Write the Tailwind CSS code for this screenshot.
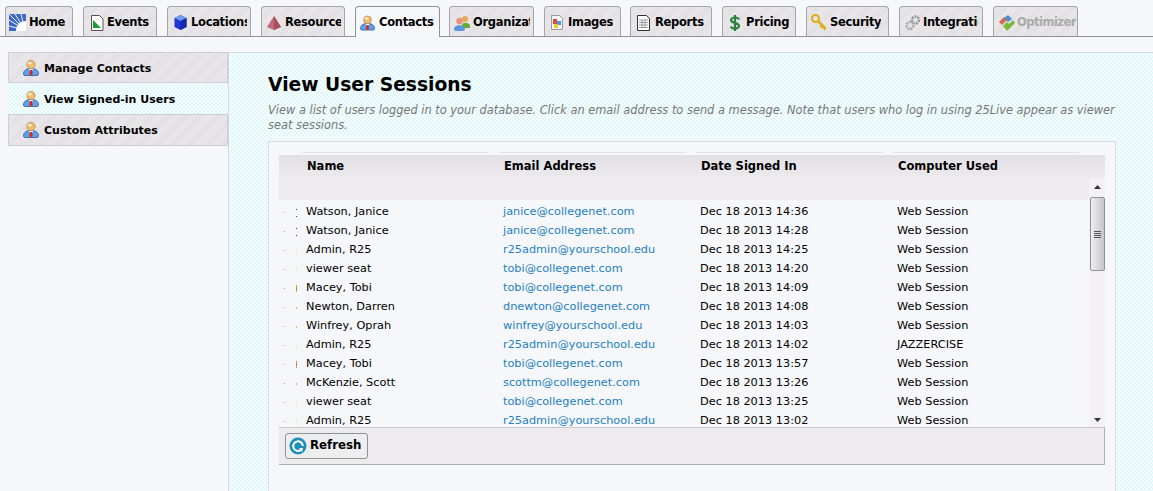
<!DOCTYPE html>
<html lang="en">
<head>
<meta charset="UTF-8">
<title>View User Sessions</title>
<script src="https://cdn.jsdelivr.net/npm/@tailwindcss/browser@4"></script>
</head>
<body class="h-[491px] overflow-hidden bg-[#f5f7fa] font-['DejaVu_Sans',Verdana,sans-serif] text-black">
<svg class="hidden">
  <symbol id="person" viewBox="0 0 16 16">
    <path d="M.5 14c0-3.500 2.500-5.500 7.500-5.500s7.500 2 7.500 5.500c0 1-.7 1.500-1.500 1.500H2C1.200 15.500.5 15 .5 14z" fill="#5f9fe8" stroke="#2c5a9e" stroke-width=".8"/>
    <path d="M5.500 8.700h5L9 10.500H7z" fill="#fff"/>
    <path d="M7 10h2l.7 4-1.700 1.500L6.300 14z" fill="#e3241c"/>
    <circle cx="8" cy="4.600" r="4.200" fill="#f0bc70" stroke="#a97b35" stroke-width=".6"/>
    <ellipse cx="6.800" cy="3.200" rx="2" ry="1.300" fill="#fcebc8"/>
  </symbol>
</svg>

<!-- tabs -->
<nav class="flex h-[37px] items-end border-b border-[#8f9296] pl-[5px] text-[11.500px] font-bold tracking-[-0.3px]">
  <a class="mr-[10px] flex h-[30px] w-[68px] items-center rounded-t-[4px] border border-b-0 border-[#a5a5a8] bg-[#e6e4e6] bg-[repeating-linear-gradient(135deg,#ebe9eb_0_1px,#e0dee0_1px_2px)] pt-[2px] pr-[3px] pl-[3px]">
    <svg class="mr-[3px] shrink-0" width="17" height="17" viewBox="0 0 17 17"><rect width="17" height="17" fill="#3f69c4"/><path d="M16 16L0 0M16 16L0 6M16 16L0 12M16 16L6 0M16 16L12 0" stroke="#e8eefa" stroke-width="1"/><path d="M17 7v10H7c0-6 4-10 10-10z" fill="#fff"/></svg>
    <span class="overflow-hidden whitespace-nowrap">Home</span>
  </a>
  <a class="mr-[10px] flex h-[30px] w-[74px] items-center rounded-t-[4px] border border-b-0 border-[#a5a5a8] bg-[#e6e4e6] bg-[repeating-linear-gradient(135deg,#ebe9eb_0_1px,#e0dee0_1px_2px)] pt-[2px] pr-[3px] pl-[6px]">
    <svg class="mr-[3px] shrink-0" width="14" height="16" viewBox="0 0 14 16"><path d="M1.500.5h8l3.500 3.500v11.500h-11.500z" fill="#fff" stroke="#555"/><path d="M3 5l8 8H3z" fill="#1f9a38"/></svg>
    <span class="overflow-hidden whitespace-nowrap">Events</span>
  </a>
  <a class="mr-[10px] flex h-[30px] w-[84px] items-center rounded-t-[4px] border border-b-0 border-[#a5a5a8] bg-[#e6e4e6] bg-[repeating-linear-gradient(135deg,#ebe9eb_0_1px,#e0dee0_1px_2px)] pt-[2px] pr-[3px] pl-[6px]">
    <svg class="mr-[4px] shrink-0" width="13" height="15" viewBox="0 0 13 15"><path d="M6.500 0l6 3v9l-6 3-6-3V3z" fill="#1c36d8"/><path d="M6.500 0l6 3-6 3-6-3z" fill="#6f9cf0"/><path d="M6.500 6l6-3v9l-6 3z" fill="#142aa8"/></svg>
    <span class="overflow-hidden whitespace-nowrap">Locations</span>
  </a>
  <a class="mr-[10px] flex h-[30px] w-[84px] items-center rounded-t-[4px] border border-b-0 border-[#a5a5a8] bg-[#e6e4e6] bg-[repeating-linear-gradient(135deg,#ebe9eb_0_1px,#e0dee0_1px_2px)] pt-[2px] pr-[3px] pl-[5px]">
    <svg class="mr-[4px] shrink-0" width="14" height="14" viewBox="0 0 14 14"><path d="M7 0l7 11-7 3-7-3z" fill="#c06a76"/><path d="M7 0l7 11-7 3z" fill="#a8505e"/></svg>
    <span class="overflow-hidden whitespace-nowrap">Resources</span>
  </a>
  <a class="relative z-10 mr-[9px] -mb-px flex h-[31px] w-[85px] items-center rounded-t-[4px] border border-b-0 border-[#8f9296] bg-[#f5f7fa] pt-[1px] pr-[3px] pl-[4px]">
    <svg class="mr-[4px] shrink-0" width="15" height="16"><use href="#person"/></svg>
    <span class="overflow-hidden whitespace-nowrap">Contacts</span>
  </a>
  <a class="mr-[10px] flex h-[30px] w-[85px] items-center rounded-t-[4px] border border-b-0 border-[#a5a5a8] bg-[#e6e4e6] bg-[repeating-linear-gradient(135deg,#ebe9eb_0_1px,#e0dee0_1px_2px)] pt-[2px] pr-[3px] pl-[4px]">
    <svg class="mr-[3px] shrink-0" width="16" height="16" viewBox="0 0 16 16"><circle cx="11" cy="4" r="3" fill="#e9a94f"/><path d="M8 10c0-3 6-3 8 0v3H8z" fill="#6aa92f"/><circle cx="5.500" cy="6" r="3.200" fill="#e98f7a"/><path d="M0 14c0-5 11-5 11 0 0 1-1 2-2 2H2c-1 0-2-1-2-2z" fill="#5a95e0"/></svg>
    <span class="overflow-hidden whitespace-nowrap">Organizations</span>
  </a>
  <a class="mr-[9px] flex h-[30px] w-[77px] items-center rounded-t-[4px] border border-b-0 border-[#a5a5a8] bg-[#e6e4e6] bg-[repeating-linear-gradient(135deg,#ebe9eb_0_1px,#e0dee0_1px_2px)] pt-[2px] pr-[3px] pl-[6px]">
    <svg class="mr-[5px] shrink-0" width="12" height="15" viewBox="0 0 12 15"><path d="M.5.500h8l3 3v11H.5z" fill="#f4f4f4" stroke="#999"/><rect x="2" y="4" width="4" height="5" fill="#e8483c"/><rect x="6" y="6" width="4" height="4" fill="#3ca0e8"/><rect x="3" y="9" width="4" height="4" fill="#f0c830"/></svg>
    <span class="overflow-hidden whitespace-nowrap">Images</span>
  </a>
  <a class="mr-[10px] flex h-[30px] w-[82px] items-center rounded-t-[4px] border border-b-0 border-[#a5a5a8] bg-[#e6e4e6] bg-[repeating-linear-gradient(135deg,#ebe9eb_0_1px,#e0dee0_1px_2px)] pt-[2px] pr-[3px] pl-[6px]">
    <svg class="mr-[5px] shrink-0" width="13" height="16" viewBox="0 0 13 16"><path d="M.5.500h9l3 3v12H.5z" fill="#fff" stroke="#333"/><path d="M2 5h9M2 7.500h9M2 10h9M2 12.500h9M5 5v8M8 5v8" stroke="#777" stroke-width=".7"/></svg>
    <span class="overflow-hidden whitespace-nowrap">Reports</span>
  </a>
  <a class="mr-[10px] flex h-[30px] w-[74px] items-center rounded-t-[4px] border border-b-0 border-[#a5a5a8] bg-[#e6e4e6] bg-[repeating-linear-gradient(135deg,#ebe9eb_0_1px,#e0dee0_1px_2px)] pt-[2px] pr-[3px] pl-[7px]">
    <svg class="mr-[6px] shrink-0" width="10" height="16" viewBox="0 0 10 16"><path d="M9 4.500C8.500 3 7 2.500 5 2.500S1 3.500 1 5c0 4 8 2 8 6 0 1.500-2 2.500-4 2.500S1.500 13 1 11.500M5 0v16" fill="none" stroke="#2f7f3f" stroke-width="2.200"/></svg>
    <span class="overflow-hidden whitespace-nowrap">Pricing</span>
  </a>
  <a class="mr-[10px] flex h-[30px] w-[83px] items-center rounded-t-[4px] border border-b-0 border-[#a5a5a8] bg-[#e6e4e6] bg-[repeating-linear-gradient(135deg,#ebe9eb_0_1px,#e0dee0_1px_2px)] pt-[2px] pr-[3px] pl-[4px]">
    <svg class="mr-[2px] shrink-0" width="17" height="17" viewBox="0 0 17 17"><circle cx="4.500" cy="4.500" r="3.500" fill="none" stroke="#e0ae1e" stroke-width="2.200"/><path d="M7 7l8 8M11.500 11.500l-2 2M14 14l-1.500 1.500" stroke="#e0ae1e" stroke-width="2.600"/></svg>
    <span class="overflow-hidden whitespace-nowrap">Security</span>
  </a>
  <a class="mr-[10px] flex h-[30px] w-[84px] items-center rounded-t-[4px] border border-b-0 border-[#a5a5a8] bg-[#e6e4e6] bg-[repeating-linear-gradient(135deg,#ebe9eb_0_1px,#e0dee0_1px_2px)] pt-[2px] pr-[4px] pl-[5px]">
    <svg class="mr-[2px] shrink-0" width="16" height="16" viewBox="0 0 16 16"><circle cx="10.500" cy="5" r="3.500" fill="none" stroke="#8e9398" stroke-width="2.400" stroke-dasharray="2 1"/><circle cx="5" cy="10.500" r="3.500" fill="none" stroke="#a5a9ad" stroke-width="2.400" stroke-dasharray="2 1"/></svg>
    <span class="overflow-hidden whitespace-nowrap">Integrations</span>
  </a>
  <a class="flex h-[30px] w-[85px] items-center rounded-t-[4px] border border-b-0 border-[#a5a5a8] bg-[#e6e4e6] bg-[repeating-linear-gradient(135deg,#ebe9eb_0_1px,#e0dee0_1px_2px)] pt-[2px] pl-[4px] text-[#a9a9ab]">
    <svg class="mr-[2px] shrink-0" width="17" height="16" viewBox="0 0 17 16"><path d="M1 7l5-5 3 3-5 5z" fill="#d9694a"/><path d="M6 3l4-3 4 4-4 3z" fill="#4f8fd0"/><path d="M5 11l4-4 2 2 4-4 2 3-8 8z" fill="#7cb83c"/></svg>
    <span class="overflow-hidden tracking-[-0.5px] whitespace-nowrap">Optimizer</span>
  </a>
</nav>

<div class="mt-[15px] flex h-[439px] pl-[8px]">
  <!-- side menu -->
  <aside class="w-[220px] shrink-0 text-[11px] font-bold">
    <a class="flex h-[31px] items-center border border-[#cfced3] bg-[#e6e4e6] bg-[repeating-linear-gradient(135deg,#ebe9eb_0_1px,#e0dee0_1px_2px)] pl-[14px]">
      <svg class="mr-[5px] shrink-0" width="16" height="16"><use href="#person"/></svg><span class="mt-[4px]">Manage Contacts</span>
    </a>
    <a class="flex h-[31px] items-center bg-[#f6fbfd] bg-[radial-gradient(#dff7f9_0.7px,transparent_0.8px),radial-gradient(#dff7f9_0.7px,transparent_0.8px)] bg-[length:4px_4px] bg-[position:0_0,2px_2px] pl-[15px]">
      <svg class="mr-[5px] shrink-0" width="16" height="16"><use href="#person"/></svg><span class="mt-[4px]">View Signed-in Users</span>
    </a>
    <a class="flex h-[32px] items-center border border-[#cfced3] bg-[#e6e4e6] bg-[repeating-linear-gradient(135deg,#ebe9eb_0_1px,#e0dee0_1px_2px)] pl-[14px]">
      <svg class="mr-[5px] shrink-0" width="16" height="16"><use href="#person"/></svg><span class="mt-[3px]">Custom Attributes</span>
    </a>
  </aside>

  <!-- main panel -->
  <main class="min-w-0 flex-1 border-t border-l border-[#d6d6dd] bg-[#f6fbfd] bg-[radial-gradient(#dff7f9_0.7px,transparent_0.8px),radial-gradient(#dff7f9_0.7px,transparent_0.8px)] bg-[length:4px_4px] bg-[position:0_0,2px_2px] pt-[19px] pr-[37px] pl-[39px]">
    <h1 class="text-[18.700px] leading-[26px] font-bold">View User Sessions</h1>
    <p class="mt-[5px] w-[860px] text-[11.400px] leading-[15px] text-[#777] italic">View a list of users logged in to your database. Click an email address to send a message. Note that users who log in using 25Live appear as viewer seat sessions.</p>

    <section class="mt-[8px] h-[360px] border border-[#dcd9e0] bg-[#f5f7fa] px-[10px] pt-[10px]">
      <div class="grid h-[3px] grid-cols-[23px_197px_197px_197px_1fr]">
        <span></span>
        <span class="mr-[10px] border-t border-[#e4e4e8]"></span>
        <span class="mr-[10px] border-t border-[#e4e4e8]"></span>
        <span class="mr-[10px] border-t border-[#e4e4e8]"></span>
        <span class="mr-[26px] border-t border-[#e4e4e8]"></span>
      </div>
      <div class="bg-[#ecebee] bg-[conic-gradient(#f5e6e8_25%,#e6eff2_0_50%,#f5e6e8_0_75%,#e6eff2_0)] bg-[length:4px_4px]">
        <div class="grid h-[23px] grid-cols-[28px_197px_197px_197px_1fr] items-center bg-[linear-gradient(#d8d8e090,#e8e8eb40)] text-[11.500px] font-bold">
          <span></span><span>Name</span><span>Email Address</span><span>Date Signed In</span><span>Computer Used</span>
        </div>
        <div class="h-[22px]"></div>
      </div>

      <div class="flex h-[227px]">
        <div id="rows" class="flex-1 overflow-hidden pt-[3px] text-[11.300px]"></div>
        <!-- scrollbar -->
        <div class="-mt-[22px] flex h-[249px] w-[16px] flex-col items-center bg-[#f2f2f4] bg-[conic-gradient(#f8eff0_25%,#eef4f6_0_50%,#f8eff0_0_75%,#eef4f6_0)] bg-[length:4px_4px]">
          <div class="flex h-[11px] items-end"><svg width="7" height="4"><path d="M3.500 0L7 4H0z" fill="#333"/></svg></div>
          <div class="mt-[8px] flex h-[74px] w-[15px] items-center justify-center rounded-[2px] border border-[#8f9296] bg-[linear-gradient(90deg,#eee,#c6c6c9)]">
            <svg width="7" height="7"><path d="M0 .5h7M0 2.500h7M0 4.500h7M0 6.500h7" stroke="#555"/></svg>
          </div>
          <div class="mt-auto flex h-[9px] items-start"><svg width="7" height="4"><path d="M0 0h7L3.500 4z" fill="#333"/></svg></div>
        </div>
      </div>

      <div class="flex h-[38px] items-center border-t border-r border-b border-t-[#c8c8cc] border-r-[#b0b0b4] border-b-[#b0b0b4] bg-[#ecebee] bg-[conic-gradient(#f5e6e8_25%,#e6eff2_0_50%,#f5e6e8_0_75%,#e6eff2_0)] bg-[length:4px_4px] pl-[6px]">
        <button class="flex h-[26px] w-[83px] items-center rounded-[3px] border border-[#8f9296] bg-[#eceef0] pl-[3px] text-[11.800px] font-bold">
          <svg class="mr-[3px]" width="18" height="18" viewBox="0 0 18 18"><circle cx="9" cy="9" r="8.500" fill="#1f8fb8"/><path d="M11.500 13.200A4.800 4.800 0 1 1 13.800 9" fill="none" stroke="#fff" stroke-width="2"/><path d="M10 11h4l-1 4z" fill="#fff"/></svg>Refresh
        </button>
      </div>
    </section>
  </main>
</div>

<script>
  // orange tick, then the second tick that differs per row
  const dark = 'h-[8px] border-y border-[#444]';
  const pale = 'h-[6px] bg-[#f6ecc4]';
  const split = 'h-[7px] border-y-[3px] border-[#d89a30] bg-[#777]';
  const tick = 'h-[2px] bg-[#f0b050]';
  const sessions = [
    ['Watson, Janice', 'janice@collegenet.com', 'Dec 18 2013 14:36', 'Web Session', dark],
    ['Watson, Janice', 'janice@collegenet.com', 'Dec 18 2013 14:28', 'Web Session', dark],
    ['Admin, R25', 'r25admin@yourschool.edu', 'Dec 18 2013 14:25', 'Web Session', pale],
    ['viewer seat', 'tobi@collegenet.com', 'Dec 18 2013 14:20', 'Web Session', pale],
    ['Macey, Tobi', 'tobi@collegenet.com', 'Dec 18 2013 14:09', 'Web Session', split],
    ['Newton, Darren', 'dnewton@collegenet.com', 'Dec 18 2013 14:08', 'Web Session', tick],
    ['Winfrey, Oprah', 'winfrey@yourschool.edu', 'Dec 18 2013 14:03', 'Web Session', tick],
    ['Admin, R25', 'r25admin@yourschool.edu', 'Dec 18 2013 14:02', 'JAZZERCISE', pale],
    ['Macey, Tobi', 'tobi@collegenet.com', 'Dec 18 2013 13:57', 'Web Session', split],
    ['McKenzie, Scott', 'scottm@collegenet.com', 'Dec 18 2013 13:26', 'Web Session', tick],
    ['viewer seat', 'tobi@collegenet.com', 'Dec 18 2013 13:25', 'Web Session', pale],
    ['Admin, R25', 'r25admin@yourschool.edu', 'Dec 18 2013 13:02', 'Web Session', pale],
  ];
  document.getElementById('rows').innerHTML = sessions.map(s => `
    <div class="grid h-[19px] grid-cols-[27px_197px_197px_197px_1fr] items-center">
      <span class="flex items-center pl-[5px]"><i class="h-px w-px bg-[#f0952a]"></i><i class="ml-[11px] w-px ${s[4]}"></i></span>
      <span>${s[0]}</span>
      <a class="text-[#1d7fc2]">${s[1]}</a>
      <span>${s[2]}</span>
      <span>${s[3]}</span>
    </div>`).join('');
</script>
</body>
</html>
